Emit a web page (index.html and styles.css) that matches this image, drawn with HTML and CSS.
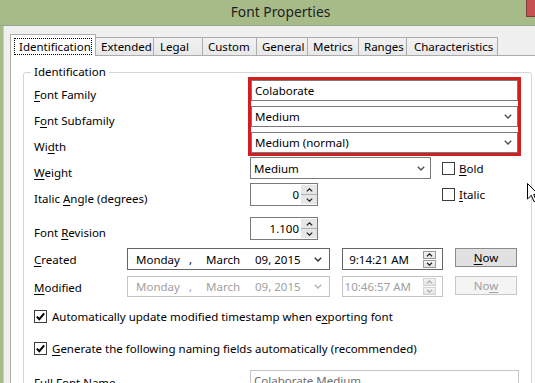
FILE: index.html
```html
<!DOCTYPE html>
<html lang="en">
<head>
    <meta charset="UTF-8" />
    <title>Font Properties</title>
    <link rel="stylesheet" href="styles.css">
</head>
<body>
    <div class="window">
        <div class="titlebar">
            Font Properties
            <span class="close"></span>
        </div>

        <div class="frame">
            <div class="tabs">
                <div class="tab active"><span class="focus">Identification</span></div>
                <div class="tab tab-extended">Extended</div>
                <div class="tab tab-legal">Legal</div>
                <div class="tab tab-custom">Custom</div>
                <div class="tab tab-general">General</div>
                <div class="tab tab-metrics">Metrics</div>
                <div class="tab tab-ranges">Ranges</div>
                <div class="tab tab-chars">Characteristics</div>
            </div>

            <div class="page">
                <fieldset class="group">
                    <legend>Identification</legend>

                    <div class="names">
                        <div class="names-labels">
                            <div><u>F</u>ont Family</div>
                            <div>F<u>o</u>nt Subfamily</div>
                            <div>Wi<u>d</u>th</div>
                        </div>
                        <div class="highlight">
                            <div class="field">Colaborate</div>
                            <div class="field combo">
                                <span class="combo-text">Medium</span>
                                <svg class="chev" width="8" height="5" viewBox="0 0 8 5"><path d="M0.8 0.8 L4 4 L7.2 0.8" /></svg>
                            </div>
                            <div class="field combo">
                                <span class="combo-text">Medium (normal)</span>
                                <svg class="chev" width="8" height="5" viewBox="0 0 8 5"><path d="M0.8 0.8 L4 4 L7.2 0.8" /></svg>
                            </div>
                        </div>
                    </div>

                    <div class="row row-weight">
                        <div class="row-label"><u>W</u>eight</div>
                        <div class="field combo weight">
                            <span class="combo-text">Medium</span>
                            <svg class="chev" width="8" height="5" viewBox="0 0 8 5"><path d="M0.8 0.8 L4 4 L7.2 0.8" /></svg>
                        </div>
                        <div class="check"><span class="box"></span><span><u>B</u>old</span></div>
                    </div>

                    <div class="row row-angle">
                        <div class="row-label">Italic <u>A</u>ngle (degrees)</div>
                        <div class="spin">
                            <span class="spin-value">0</span>
                            <span class="spin-btns">
                                <span><svg width="7" height="4" viewBox="0 0 7 4"><path d="M0.8 3.4 L3.5 0.8 L6.2 3.4" /></svg></span>
                                <span><svg width="7" height="4" viewBox="0 0 7 4"><path d="M0.8 0.6 L3.5 3.2 L6.2 0.6" /></svg></span>
                            </span>
                        </div>
                        <div class="check"><span class="box"></span><span><u>I</u>talic</span></div>
                    </div>

                    <div class="row row-revision">
                        <div class="row-label">Font <u>R</u>evision</div>
                        <div class="spin">
                            <span class="spin-value">1.100</span>
                            <span class="spin-btns">
                                <span><svg width="7" height="4" viewBox="0 0 7 4"><path d="M0.8 3.4 L3.5 0.8 L6.2 3.4" /></svg></span>
                                <span><svg width="7" height="4" viewBox="0 0 7 4"><path d="M0.8 0.6 L3.5 3.2 L6.2 0.6" /></svg></span>
                            </span>
                        </div>
                    </div>

                    <div class="date-row row-created">
                        <div class="date-label"><u>C</u>reated</div>
                        <div class="datepicker">
                            <span class="dp-day">Monday</span>
                            <span class="dp-sep">,</span>
                            <span class="dp-month">March</span>
                            <span class="dp-year">09, 2015</span>
                            <svg class="chev" width="8" height="5" viewBox="0 0 8 5"><path d="M0.8 0.8 L4 4 L7.2 0.8" /></svg>
                        </div>
                        <div class="timepicker">
                            <span class="time-value">9:14:21 AM</span>
                            <span class="time-spin">
                                <span><svg width="7" height="4" viewBox="0 0 7 4"><path d="M1 3.2 L3.5 0.8 L6 3.2" /></svg></span>
                                <span><svg width="7" height="4" viewBox="0 0 7 4"><path d="M1 0.8 L3.5 3.2 L6 0.8" /></svg></span>
                            </span>
                        </div>
                        <div class="button"><u>N</u>ow</div>
                    </div>

                    <div class="date-row row-modified disabled">
                        <div class="date-label"><u>M</u>odified</div>
                        <div class="datepicker">
                            <span class="dp-day">Monday</span>
                            <span class="dp-sep">,</span>
                            <span class="dp-month">March</span>
                            <span class="dp-year">09, 2015</span>
                            <svg class="chev" width="8" height="5" viewBox="0 0 8 5"><path d="M0.8 0.8 L4 4 L7.2 0.8" /></svg>
                        </div>
                        <div class="timepicker">
                            <span class="time-value">10:46:57 AM</span>
                            <span class="time-spin">
                                <span><svg width="7" height="4" viewBox="0 0 7 4"><path d="M1 3.2 L3.5 0.8 L6 3.2" /></svg></span>
                                <span><svg width="7" height="4" viewBox="0 0 7 4"><path d="M1 0.8 L3.5 3.2 L6 0.8" /></svg></span>
                            </span>
                        </div>
                        <div class="button">No<u>w</u></div>
                    </div>

                    <div class="check-row row-auto">
                        <span class="box checked"><svg width="11" height="11" viewBox="0 0 11 11"><path d="M1.8 5.6 L4.3 8.2 L9.2 2.4" /></svg></span>
                        <span>Automatically update modified timestamp when e<u>x</u>porting font</span>
                    </div>

                    <div class="check-row row-generate">
                        <span class="box checked"><svg width="11" height="11" viewBox="0 0 11 11"><path d="M1.8 5.6 L4.3 8.2 L9.2 2.4" /></svg></span>
                        <span><u>G</u>enerate the following naming fields automatically (recommended)</span>
                    </div>

                    <div class="row row-fullname">
                        <div class="row-label">Full Font Name</div>
                        <div class="field readonly">Colaborate Medium</div>
                    </div>
                </fieldset>
            </div>
        </div>

        <svg class="cursor" width="12" height="20" viewBox="0 0 12 20"><path d="M0.5 0.5 L0.5 16 L4.3 12.3 L7 18.6 L9.3 17.6 L6.7 11.5 L11.5 11.5 Z" /></svg>
    </div>
</body>
</html>
```

FILE: styles.css
```css
* {
    box-sizing: border-box;
}
body {
    margin: 0;
    font-family: "Noto Sans", "Open Sans", sans-serif;
    font-size: 11.5px;
    color: #000;
}
u {
    text-underline-offset: 2px;
}
.window {
    position: relative;
    width: 535px;
    height: 383px;
    overflow: hidden;
    background: #f0f0f0;
}

/* title bar */
.titlebar {
    height: 26px;
    padding-left: 26px;
    background: #a7bb89;
    border-bottom: 1px solid #98a38c;
    text-align: center;
    font-size: 13.8px;
    line-height: 24px;
    color: #202020;
    white-space: nowrap;
}
.close {
    position: absolute;
    left: 526px;
    top: -1px;
    width: 45px;
    height: 18px;
    background: #c75050;
    border: 1px solid #7d3b3b;
}

/* dialog body */
.frame {
    height: 357px;
    padding-top: 8px;
    border-left: 3px solid #a7bb89;
    box-shadow: inset 1px 0 0 #c9d0bf;
}
.tabs {
    display: flex;
    align-items: flex-end;
    height: 21px;
    padding-left: 7px;
}
.tab {
    height: 18px;
    padding-left: 5px;
    line-height: 17px;
    border: 1px solid #acacac;
    border-bottom: none;
    border-left: none;
    background: linear-gradient(#f2f2f2, #e8e8e8);
    white-space: nowrap;
}
.tab.active {
    position: relative;
    z-index: 1;
    width: 86px;
    height: 22px;
    margin-bottom: -1px;
    padding: 3px 3px 0;
    border-left: 1px solid #acacac;
    background: #fff;
}
.focus {
    display: block;
    height: 17px;
    padding-left: 4px;
    line-height: 15px;
    border: 1px dotted #000;
}
.tab-extended { width: 58px; }
.tab-legal { width: 49px; padding-left: 6px; }
.tab-custom { width: 54px; }
.tab-general { width: 51px; }
.tab-metrics { width: 51px; }
.tab-ranges { width: 48px; }
.tab-chars { width: 91px; padding-left: 7px; }

.page {
    width: 540px;
    height: 340px;
    margin-left: 7px;
    background: #fff;
    border: 1px solid #acacac;
}

/* group box */
.group {
    width: 508px;
    margin: 10px 0 0 12px;
    padding: 0 10px;
    border: 1px solid #d5d5d5;
    border-radius: 3px;
}
.group legend {
    margin-left: -3px;
    padding: 0 3px;
    line-height: 12px;
}

/* font names block */
.names {
    display: flex;
    align-items: flex-start;
    margin-top: -1px;
}
.names-labels {
    width: 214px;
    padding-top: 5px;
    margin-bottom: -4px;
}
.names-labels div {
    line-height: 26px;
}
.highlight {
    display: flex;
    flex-direction: column;
    gap: 5px;
    width: 273px;
    border: 3px solid #cf1f1f;
}

/* inputs */
.field {
    height: 21px;
    padding-left: 3px;
    line-height: 19px;
    border: 1px solid #7a7a7a;
    background: #fff;
    white-space: nowrap;
}
.combo {
    display: flex;
    align-items: center;
}
.combo-text {
    flex: 1;
}
.chev {
    margin-right: 5px;
    fill: none;
    stroke: #505050;
    stroke-width: 1.4;
}
.weight {
    width: 181px;
    height: 22px;
}
.readonly {
    height: 22px;
    width: 269px;
    color: #6d6d6d;
    border-color: #c6c6c6;
}

/* label / field rows */
.row {
    display: grid;
    grid-template-columns: 216px 192px auto;
    align-items: center;
}
.row-label {
    align-self: start;
    margin-bottom: -10px;
    padding-top: 9px;
    line-height: 14px;
    white-space: nowrap;
}
.row-weight { margin-top: 1px; }
.row-angle { margin-top: 4px; }
.row-revision { margin-top: 11px; }
.row-fullname { margin-top: 14px; align-items: start; }
.row-fullname .row-label { padding-top: 6px; }

.check {
    display: flex;
    align-items: center;
    gap: 4px;
}
.box {
    display: inline-flex;
    align-items: center;
    justify-content: center;
    width: 13px;
    height: 13px;
    border: 1px solid #3c3c3c;
    background: #fff;
    flex: none;
}
.box svg {
    fill: none;
    stroke: #000;
    stroke-width: 2;
}

.spin {
    display: flex;
    width: 68px;
    height: 23px;
    border: 1px solid #7a7a7a;
    background: #fff;
}
.spin-value {
    flex: 1;
    padding-right: 2px;
    text-align: right;
    line-height: 21px;
}
.spin-btns {
    display: flex;
    flex-direction: column;
    width: 16px;
    margin: 1px 0 1px 0;
}
.spin-btns span {
    flex: 1;
    display: flex;
    align-items: center;
    justify-content: center;
    background: #e6e6e6;
}
.spin-btns span + span {
    border-top: 1px solid #b0b0b0;
}
.spin-btns svg,
.time-spin svg {
    fill: none;
    stroke: #202020;
    stroke-width: 1.2;
}

/* created / modified */
.date-row {
    display: flex;
    align-items: center;
    white-space: nowrap;
}
.row-created { margin-top: 8px; }
.row-modified { margin-top: 6px; }
.date-label {
    width: 93px;
    flex: none;
    padding-top: 1px;
}
.datepicker {
    display: flex;
    align-items: center;
    width: 203px;
    height: 22px;
    padding-left: 8px;
    border: 1px solid #666;
    background: #fff;
}
.dp-day { width: 53px; }
.dp-sep { width: 17px; }
.dp-month { width: 49px; }
.dp-year { flex: 1; }
.datepicker .chev {
    margin-right: 7px;
    stroke: #303030;
}
.timepicker {
    display: flex;
    align-items: center;
    width: 101px;
    height: 22px;
    margin-left: 12px;
    border: 1px solid #666;
    background: #fff;
}
.time-value {
    flex: 1;
    padding-right: 14px;
    text-align: right;
}
.time-spin {
    display: flex;
    flex-direction: column;
    gap: 1px;
    margin-right: 6px;
}
.time-spin span {
    display: flex;
    align-items: center;
    justify-content: center;
    width: 13px;
    height: 8px;
    border: 1px solid #9a9a9a;
    background: linear-gradient(#f4f4f4, #e4e4e4);
}
.button {
    align-self: flex-start;
    width: 62px;
    height: 19px;
    margin-left: 12px;
    line-height: 17px;
    text-align: center;
    border: 1px solid #8a8a8a;
    background: #e1e1e1;
}
.row-modified {
    height: 21px;
}
.disabled .datepicker,
.disabled .timepicker {
    height: 21px;
    color: #a0a0a0;
    border-color: #c4c4c4;
}
.disabled .time-value {
    padding-right: 12px;
}
.disabled .datepicker .chev {
    stroke: #b5b5b5;
}
.disabled .time-spin span {
    border-color: #d2d2d2;
}
.disabled .time-spin svg {
    stroke: #b0b0b0;
}
.disabled .button {
    color: #a0a0a0;
    border-color: #c8c8c8;
    background: #f4f4f4;
}

/* checkbox rows */
.check-row {
    display: flex;
    align-items: center;
    gap: 5px;
    white-space: nowrap;
}
.row-auto { margin-top: 12px; }
.row-generate { margin-top: 17px; }

/* mouse pointer over the dialog */
.cursor {
    position: absolute;
    left: 527px;
    top: 183px;
    fill: #fff;
    stroke: #000;
    stroke-width: 1;
}
```
